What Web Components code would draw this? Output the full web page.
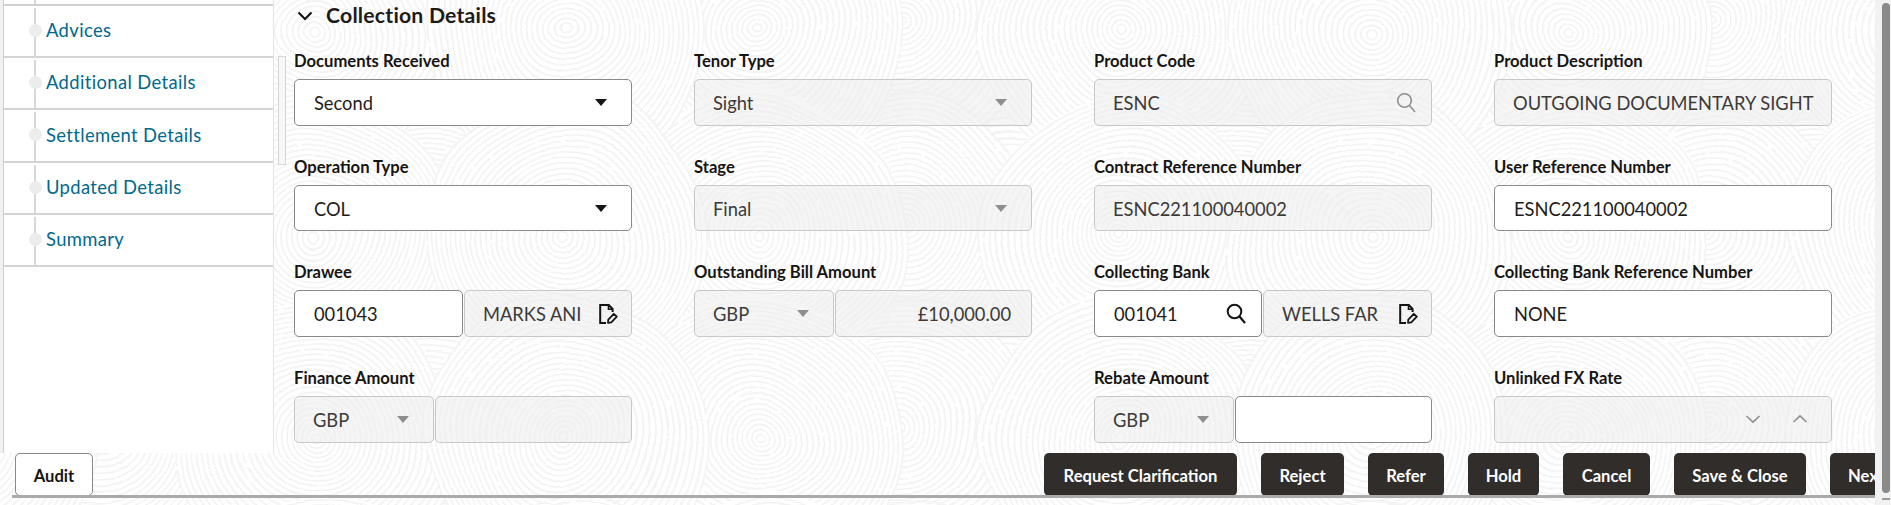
<!DOCTYPE html>
<html lang="en"><head><meta charset="utf-8"><title>Collection Details</title>
<style>
html,body{margin:0;padding:0;background:#fff;height:505px;overflow:hidden;font-family:Lato,"Noto Sans",sans-serif;color:#161513}
</style></head><body>
<x-app>
  <x-nav slot="nav">
    <x-nav-item>Advices</x-nav-item>
    <x-nav-item>Additional Details</x-nav-item>
    <x-nav-item style="padding-bottom:0">Settlement Details</x-nav-item>
    <x-nav-item>Updated Details</x-nav-item>
    <x-nav-item>Summary</x-nav-item>
  </x-nav>
  <x-section slot="main" title="Collection Details">
    <x-field label="Documents Received"><x-input value="Second" icon="caret"></x-input></x-field>
    <x-field label="Tenor Type"><x-input value="Sight" icon="caret" disabled></x-input></x-field>
    <x-field label="Product Code"><x-input value="ESNC" icon="search" disabled></x-input></x-field>
    <x-field label="Product Description"><x-input value="OUTGOING DOCUMENTARY SIGHT" disabled></x-input></x-field>

    <x-field label="Operation Type"><x-input value="COL" icon="caret"></x-input></x-field>
    <x-field label="Stage"><x-input value="Final" icon="caret" disabled></x-input></x-field>
    <x-field label="Contract Reference Number"><x-input value="ESNC221100040002" disabled></x-input></x-field>
    <x-field label="User Reference Number"><x-input value="ESNC221100040002"></x-input></x-field>

    <x-field label="Drawee" cols="169px 1fr"><x-input value="001043"></x-input><x-input value="MARKS ANI" icon="doc" disabled></x-input></x-field>
    <x-field label="Outstanding Bill Amount" cols="140px 1fr"><x-input value="GBP" icon="caret" disabled></x-input><x-input value="£10,000.00" align="right" disabled></x-input></x-field>
    <x-field label="Collecting Bank" cols="168px 1fr"><x-input value="001041" icon="search"></x-input><x-input value="WELLS FAR" icon="doc" disabled></x-input></x-field>
    <x-field label="Collecting Bank Reference Number"><x-input value="NONE"></x-input></x-field>

    <x-field label="Finance Amount" cols="140px 1fr"><x-input value="GBP" icon="caret" disabled></x-input><x-input disabled></x-input></x-field>
    <div></div>
    <x-field label="Rebate Amount" cols="140px 1fr"><x-input value="GBP" icon="caret" disabled></x-input><x-input></x-input></x-field>
    <x-field label="Unlinked FX Rate"><x-input icon="updown" disabled></x-input></x-field>
  </x-section>
  <x-footer slot="footer">
    <x-btn slot="left" kind="outline">Audit</x-btn>
    <x-btn style="width:193px">Request Clarification</x-btn>
    <x-btn style="width:83px">Reject</x-btn>
    <x-btn style="width:76px">Refer</x-btn>
    <x-btn style="width:71px">Hold</x-btn>
    <x-btn style="width:87px">Cancel</x-btn>
    <x-btn style="width:132px">Save &amp; Close</x-btn>
    <x-btn style="width:72px">Next</x-btn>
  </x-footer>
</x-app>
<script>
const def=(name,html)=>{
  customElements.define(name,class extends HTMLElement{
    connectedCallback(){
      if(this.shadowRoot)return;
      const r=this.attachShadow({mode:'open'});
      r.innerHTML=typeof html==='function'?html(this):html;
    }
  });
};

/* fingerprint-like background: overlapping scales of concentric arcs, warped */
function patternSVG(){
  const W=805,H=203,ox=640,oy=193-203;
  const domes=[[905,225,128],[760,235,145],[1010,215,110],[690,125,100],[845,85,110],[1120,235,140],
   [1240,225,130],[1370,235,140],[1010,90,85],[1180,100,120],[1320,100,115],[1430,130,95],[770,40,70],[1090,30,70]];
  let out='';
  const dxs=[-W,0,W],dys=[-H,0,H];
  [...domes].sort((a,b)=>a[1]-b[1]).forEach(([x,y,R],i)=>{
    const tx=x-ox,ty=y-oy;
    dys.forEach(dy=>dxs.forEach(dx=>{
      const cx=tx+dx,cy=ty+dy;
      if(cx+R<0||cx-R>W||cy+R<0||cy-R>H)return;
      out+=`<circle cx="${cx}" cy="${cy}" r="${R}" fill="#fff" stroke="none"/>`;
      for(let rr=R;rr>3;rr-=5.4){
        const ry=rr*(1+.05*Math.sin(i));
        out+=`<ellipse cx="${cx}" cy="${cy}" rx="${rr.toFixed(1)}" ry="${ry.toFixed(1)}" fill="none" stroke="#f3f3f3" stroke-width="1.6" stroke-dasharray="${70+i*11} 4"/>`;
      }
    }));
  });
  return `<svg width="1891" height="505" xmlns="http://www.w3.org/2000/svg" aria-hidden="true"><defs><pattern id="p" patternUnits="userSpaceOnUse" x="${ox}" y="${oy}" width="${W}" height="${H}">${out}</pattern><filter id="w" x="0" y="0" width="100%" height="100%"><feTurbulence type="fractalNoise" baseFrequency=".009" numOctaves="1" seed="7"/><feDisplacementMap in="SourceGraphic" scale="30" xChannelSelector="R" yChannelSelector="G"/></filter></defs><rect x="-40" y="-40" width="1971" height="585" fill="url(#p)" filter="url(#w)"/></svg>`;
}
def('x-pattern',()=>`<style>:host{display:block;position:absolute;inset:0;z-index:0;pointer-events:none;overflow:hidden}svg{display:block}</style>${patternSVG()}`);

def('x-app',`<style>
:host{display:block;position:relative;width:1891px;height:505px;overflow:hidden;background:#fff}
.top{position:relative;z-index:1;display:grid;grid-template-columns:4px 270px 1fr;height:453px}
.strip{background:#f1f1f1;border-right:1px solid #cfcfcf;box-sizing:content-box;width:3px}
.side{background:#fff;border-right:1px solid #dfe5ea;overflow:hidden}
.main{position:relative}
.thumb{position:absolute;left:4px;top:56px;width:6px;height:107px;border:1px solid #d6d6d6;background:#f7f7f7}
.foot{position:relative;z-index:1}
.sb{position:absolute;z-index:2;left:1882px;top:3px;width:8px;height:490px;border-radius:4px;background:#8a8a8a}
.rail{position:absolute;z-index:1;left:1875px;top:0;width:16px;height:505px;background:#f1f1f1;opacity:.9}
.end{position:absolute;z-index:2;left:1882px;top:498px;width:8px;height:2px;background:#9a9a9a}
</style>
<x-pattern></x-pattern>
<div class="top"><div class="strip"></div><div class="side"><slot name="nav"></slot></div><div class="main"><div class="thumb"></div><slot name="main"></slot></div></div>
<div class="foot"><slot name="footer"></slot></div>
<div class="rail"></div><div class="sb"></div><div class="end"></div>`);

def('x-nav',`<style>:host{display:block}
.stub{border-bottom:2px solid #d0d0d0;position:relative;height:3.5px}
.stub:before{content:"";position:absolute;left:30px;top:0;width:2px;height:3.5px;background:#d8d8d8}
</style><div class="stub"></div><slot></slot>`);

def('x-nav-item',`<style>
:host{display:flex;align-items:center;height:52.4px;box-sizing:border-box;border-bottom:2px solid #d4d4d4;position:relative;padding:0 0 2px 42px;font:400 18.4px/24px Lato,"Noto Sans",sans-serif;color:#00688c;letter-spacing:.02em}
.line{position:absolute;left:30px;top:2px;bottom:0;width:2px;background:#d8d8d8}
.dot{position:absolute;left:24.5px;top:18px;width:13px;height:13px;border-radius:50%;background:#ececec}
</style><span class="line"></span><span class="dot"></span><slot></slot>`);

def('x-section',h=>`<style>
:host{display:block;padding:0 0 0 20px}
.head{display:flex;align-items:center;height:31px;margin-bottom:17px}
.head svg{margin-left:3px;width:16px;height:10px}
h2{margin:0 0 0 13px;font:700 21.2px/31px Lato,"Noto Sans",sans-serif;color:#1d1b19;letter-spacing:.01em}
.grid{display:grid;grid-template-columns:repeat(4,338px);column-gap:62px;row-gap:28px}
</style>
<div class="head"><svg viewBox="0 0 16 10"><path d="M1.5 1.5 8 8l6.5-6.5" fill="none" stroke="#161513" stroke-width="2.2"/></svg><h2>${h.getAttribute('title')}</h2></div>
<div class="grid"><slot></slot></div>`);

def('x-field',h=>`<style>
:host{display:block;min-width:0}
label{display:block;height:23px;padding-top:1px;margin-bottom:7px;font:700 16.6px/24px Lato,"Noto Sans",sans-serif;color:#161513;white-space:nowrap}
.row{display:grid;grid-template-columns:${h.getAttribute('cols')||'1fr'};column-gap:1px}
</style><label>${h.getAttribute('label')}</label><div class="row"><slot></slot></div>`);

const ICONS={
 caret:c=>`<svg width="12" height="7" viewBox="0 0 12 7"><path d="M0 0h12L6 7z" fill="${c}"/></svg>`,
 search:c=>`<svg width="20" height="21" viewBox="0 0 20 21"><circle cx="8.5" cy="8.5" r="6.8" fill="none" stroke="${c}" stroke-width="${c==='#8f8f8f'?1.6:2}"/><path d="M13.5 13.5 19 20" fill="none" stroke="${c}" stroke-width="${c==='#8f8f8f'?1.6:2.2}"/></svg>`,
 doc:()=>`<svg width="19" height="20" viewBox="0 0 19 20"><path d="M7 19H1.2V1H9.8L13.6 5V8" fill="none" stroke="#161513" stroke-width="2"/><path d="M9.5 1V5.2H13.6" fill="none" stroke="#161513" stroke-width="1.6"/><path d="M9.3 15.6 14.8 9.8 17.8 12.6 12.3 18.4 9 18.9z" fill="none" stroke="#161513" stroke-width="1.8" stroke-linejoin="round"/></svg>`,
 updown:c=>`<svg width="64" height="10" viewBox="0 0 64 10"><path d="M1.5 2 8 8l6.5-6" fill="none" stroke="${c}" stroke-width="1.7"/><path d="M48.5 8 55 2l6.5 6" fill="none" stroke="${c}" stroke-width="1.7"/></svg>`
};
def('x-input',h=>{
  const dis=h.hasAttribute('disabled'),ic=h.getAttribute('icon'),al=h.getAttribute('align');
  const pad={caret:'24.5px',search:'15px',doc:'13px',updown:'22px'}[ic]||(al?'20px':'10px');
  return `<style>
:host{display:block;min-width:0}
.box{display:flex;align-items:center;height:46.7px;box-sizing:border-box;border:1px solid ${dis?'#c8c8c8':'#8b8987'};border-radius:5px;background:${dis?'rgba(236,236,236,.55)':'#fff'};padding:0 ${pad} 0 ${al?'20px':dis?'18px':'19px'};font:400 18.3px/24px Lato,"Noto Sans",sans-serif;color:${dis?'#3c3a38':'#1f1d1b'}}
.v{flex:1;min-width:0;white-space:nowrap;overflow:hidden;text-align:${al||'left'};padding-top:1px}
svg{display:block;flex:none;margin-left:4px}
</style><div class="box"><span class="v">${h.getAttribute('value')||''}</span>${ic?ICONS[ic](dis?'#8f8f8f':'#161513'):''}</div>`;
});

def('x-btn',h=>{
  const o=h.getAttribute('kind')==='outline';
  return `<style>
:host{display:block;flex:none;box-sizing:border-box;height:43px;border-radius:5px;${o?'width:78px;background:#fff;border:1px solid #8b8987;color:#161513':'background:#312d2a;color:#fff'};font:700 16.6px/${o?45:47}px Lato,"Noto Sans",sans-serif;text-align:center;white-space:nowrap;overflow:hidden}
</style><slot></slot>`;
});

def('x-footer',`<style>
:host{display:flex;height:44.5px;width:1863px;margin-left:12px;box-sizing:border-box;border-bottom:3px solid #aaa;padding-left:3px;overflow:hidden}
.l{flex:none;width:1029px}
.r{display:flex;gap:24px;flex:none}
</style><div class="l"><slot name="left"></slot></div><div class="r"><slot></slot></div>`);
</script>
</body></html>
